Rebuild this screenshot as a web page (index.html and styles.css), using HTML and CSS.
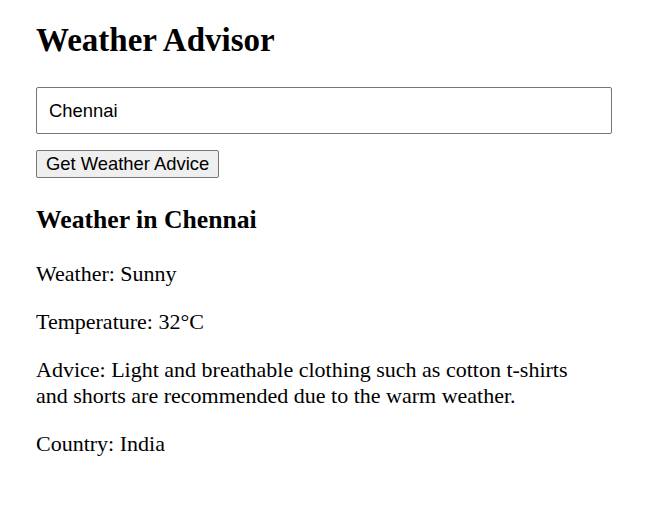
FILE: index.html
```html
<!DOCTYPE html>
<html>
<head>
<meta charset="utf-8">
<link rel="stylesheet" href="styles.css">
</head>
<body>
<div class="app">
  <h1 class="title">Weather Advisor</h1>
  <input class="city" type="text" value="Chennai">
  <button class="go">Get Weather Advice</button>
  <div class="result">
    <h2 class="result-title">Weather in Chennai</h2>
    <p class="line">Weather: Sunny</p>
    <p class="line">Temperature: 32°C</p>
    <p class="line">Advice: Light and breathable clothing such as cotton t-shirts and shorts are recommended due to the warm weather.</p>
    <p class="line">Country: India</p>
  </div>
</div>
</body>
</html>
```
FILE: styles.css
```css
html, body {
  margin: 0;
  background: #fff;
}
body {
  font-family: "Liberation Serif", "Times New Roman", serif;
  color: #000;
}
.app {
  padding: 0 36px;
  width: 576px;
}
.title {
  font-size: 33px;
  font-weight: bold;
  margin: 21px 0 0;
  line-height: 38px;
}
.city {
  display: block;
  box-sizing: border-box;
  width: 576px;
  height: 47px;
  margin-top: 28px;
  padding: 0 12px;
  font-family: "Liberation Sans", Arial, sans-serif;
  font-size: 18.4px;
  border: 1px solid #767676;
  border-radius: 2px;
  color: #000;
}
.go {
  display: block;
  margin-top: 16px;
  height: 28px;
  padding: 1px 9px;
  font-family: "Liberation Sans", Arial, sans-serif;
  font-size: 18.4px;
  color: #000;
  background: #efefef;
  border: 1px solid #767676;
  border-radius: 2px;
}
.result {
  width: 550px;
}
.result-title {
  font-size: 25.7px;
  line-height: 30px;
  margin: 27px 0 0;
}
.line {
  font-size: 22px;
  line-height: 26px;
  margin: 22px 0 0;
}
.result-title + .line {
  margin-top: 26px;
}
```
